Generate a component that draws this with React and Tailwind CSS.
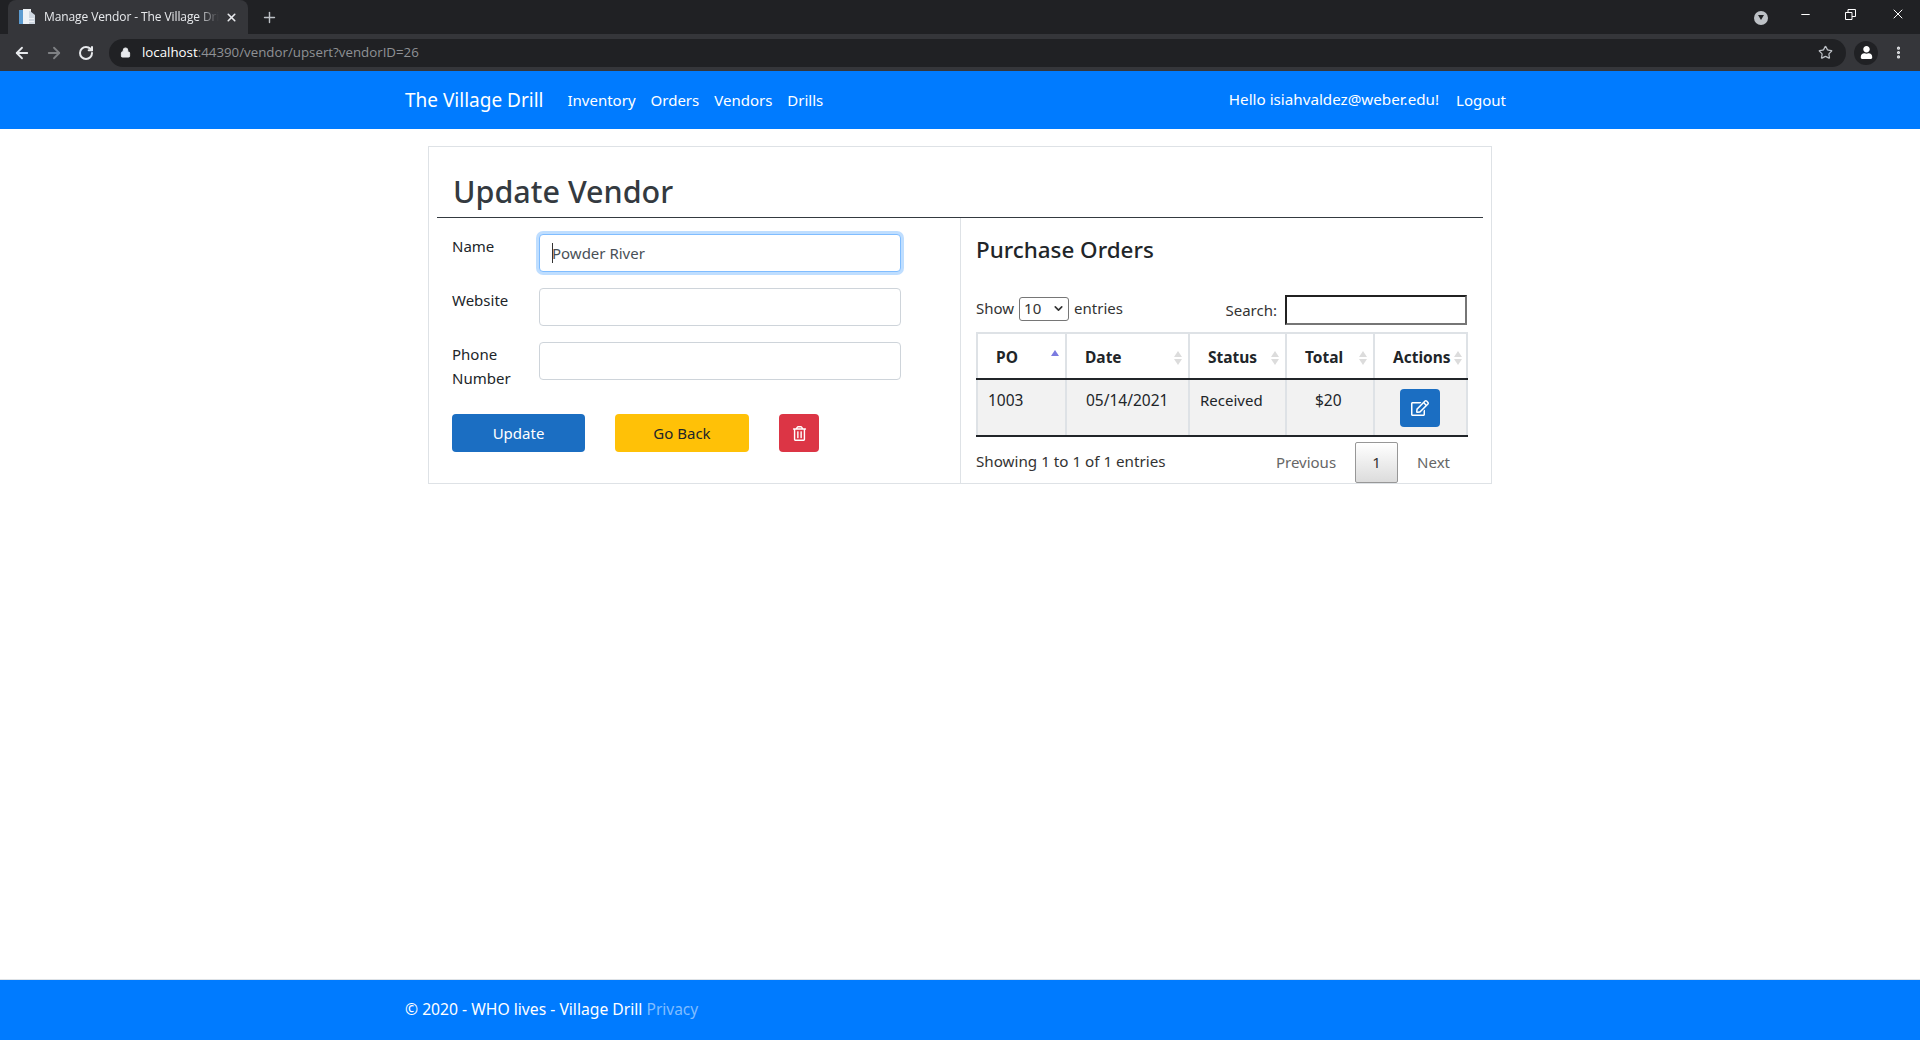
import { ArrowLeft, ArrowRight, RotateCw, Lock, Star, Plus, X, Minus, ChevronDown, MoreVertical } from 'lucide-react';
import { FaRegEdit, FaRegTrashAlt, FaUser } from 'react-icons/fa';

const font = "font-['Noto_Sans','Open_Sans',sans-serif]";
const inputBase = "block w-[362px] h-[38px] rounded border border-[#ced4da] bg-white px-3 text-[15px] text-[#495057]";

function SortArrows({ active }) {
    return (
        <span className="flex flex-col gap-[2px] w-[9px] items-center">
            <span className={`w-0 h-0 border-x-[4px] border-x-transparent border-b-[6px] ${active ? 'border-b-[#7b7be0]' : 'border-b-[#dcdcdc]'}`} />
            {!active && <span className="w-0 h-0 border-x-[4px] border-x-transparent border-t-[6px] border-t-[#dcdcdc]" />}
        </span>
    );
}

function Favicon() {
    return (
        <svg width="16" height="16" viewBox="0 0 16 16" className="mr-[9px] shrink-0">
            <rect x="0" y="1" width="5" height="14" fill="#5b9bd0" />
            <rect x="4" y="0" width="8" height="15" fill="#eef2f6" />
            <path d="M11 2l5 4v9h-6V2z" fill="#cfd8e2" />
            <rect x="10" y="9" width="5" height="1" fill="#eef2f6" />
            <rect x="10" y="12" width="5" height="1" fill="#eef2f6" />
        </svg>
    );
}

function BrowserChrome() {
    return (
        <div className="shrink-0 font-['Open_Sans',sans-serif]">
            <div className="h-[34px] bg-[#202124] flex items-end pl-[8px]">
                <div className="w-[240px] h-[34px] bg-[#35363a] rounded-t-lg flex items-center pl-[11px] pr-[10px] text-[12px] text-[#e8eaed]">
                    <Favicon />
                    <span className="flex-1 whitespace-nowrap overflow-hidden tracking-[-0.1px] [mask-image:linear-gradient(to_right,black_88%,transparent)]">Manage Vendor - The Village Drill</span>
                    <X size={13} strokeWidth={3} className="ml-[6px] shrink-0 text-[#e8eaed]" />
                </div>
                <Plus size={17} className="ml-[13px] mb-[8px] text-[#bdc1c6]" />
                <div className="flex-1" />
                <div className="flex items-center h-[34px] pr-[14px] text-white">
                    <span className="w-[14px] h-[14px] rounded-full bg-[#bdc1c6] flex items-center justify-center mr-[31px] mt-[1px]">
                        <span className="w-0 h-0 border-x-[3px] border-x-transparent border-t-[5px] border-t-[#202124]" />
                    </span>
                    <Minus size={13} className="mr-[33px] -mt-[6px]" />
                    <svg width="11" height="11" viewBox="0 0 11 11" fill="none" stroke="white" className="mr-[34px] -mt-[6px]">
                        <path d="M.5 3.5h6.5v7H.5z" />
                        <path d="M3 3.5V.5h7.5v7H7" />
                    </svg>
                    <X size={16} strokeWidth={1.5} className="-mt-[6px]" />
                </div>
            </div>
            <div className="h-[37px] bg-[#35363a] flex items-center pl-[13px] pr-[14px] text-[#e8eaed]">
                <ArrowLeft size={18} strokeWidth={2.4} />
                <ArrowRight size={18} strokeWidth={2.4} className="ml-[14px] text-[#7f8184]" />
                <RotateCw size={16} strokeWidth={3} className="ml-[15px]" />
                <div className="ml-[15px] flex-1 h-[28px] rounded-full bg-[#202124] flex items-center pl-[11px] pr-[13px] text-[13.3px]">
                    <Lock size={11} fill="#e8eaed" strokeWidth={2} />
                    <span className="ml-[11px] text-white">localhost</span>
                    <span className="text-[#8f9195]">:44390/vendor/upsert?vendorID=26</span>
                    <div className="flex-1" />
                    <Star size={15} className="text-[#bdc1c6]" />
                </div>
                <span className="ml-[8px] w-[24px] h-[24px] rounded-full bg-[#202124] flex items-center justify-center">
                    <FaUser size={13} className="text-white" />
                </span>
                <MoreVertical size={15} strokeWidth={3} className="ml-[13px]" />
            </div>
        </div>
    );
}

function NavBar() {
    return (
        <nav className="shrink-0 h-[58px] bg-[#007bff] flex items-center pl-[405px] pr-[414px] text-white text-[15px]">
            <span className="text-[19px] mr-[24px]">The Village Drill</span>
            <div className="flex gap-[15px]">
                <span>Inventory</span>
                <span>Orders</span>
                <span>Vendors</span>
                <span>Drills</span>
            </div>
            <div className="flex-1" />
            <span className="mr-[17px] text-[15.2px] -mt-[1px]">Hello isiahvaldez@weber.edu!</span>
            <span>Logout</span>
        </nav>
    );
}

function VendorForm() {
    return (
        <div className="w-[523px] pl-[15px] pt-[16px] text-[15px]">
            <div className="flex flex-col gap-[16px]">
                <div className="flex">
                    <label className="w-[87px] leading-[24px]">Name</label>
                    <div className="w-[362px] h-[38px] rounded border border-[#80bdff] shadow-[0_0_0_3px_rgba(0,123,255,0.25)] bg-white px-3 flex items-center text-[#495057]">
                        <span className="w-px h-[20px] bg-[#333] -mr-px" />
                        <span>Powder River</span>
                    </div>
                </div>
                <div className="flex">
                    <label className="w-[87px] leading-[24px]">Website</label>
                    <input className={inputBase} />
                </div>
                <div className="flex h-[38px]">
                    <label className="w-[87px] leading-[24px]">Phone Number</label>
                    <input className={inputBase} />
                </div>
            </div>
            <div className="flex mt-[34px]">
                <button className="w-[133px] h-[38px] rounded bg-[#1b6ec2] text-white">Update</button>
                <button className="ml-[30px] w-[134px] h-[38px] rounded bg-[#ffc107] text-[#212529]">Go Back</button>
                <button className="ml-[30px] w-[40px] h-[38px] rounded bg-[#dc3545] text-white flex items-center justify-center">
                    <FaRegTrashAlt size={15} />
                </button>
            </div>
        </div>
    );
}

function OrdersTable() {
    const thBase = "border-x-2 border-t-2 border-[#dee2e6] border-b-2 border-b-[#212529] font-bold h-[46px] px-0";
    const tdBase = "border-x-2 border-[#dee2e6] border-b-2 border-b-[#212529] align-top pt-[9px] h-[57px]";
    return (
        <table className="w-[490px] table-fixed border-collapse text-[15.5px]">
            <colgroup>
                <col className="w-[89px]" />
                <col className="w-[123px]" />
                <col className="w-[97px]" />
                <col className="w-[88px]" />
                <col className="w-[93px]" />
            </colgroup>
            <thead>
                <tr>
                    <th className={thBase}>
                        <div className="flex items-center pl-[18px] pr-[6px] pt-[3px]"><span className="flex-1 text-left">PO</span><span className="-mt-[9px]"><SortArrows active /></span></div>
                    </th>
                    <th className={thBase}>
                        <div className="flex items-center pl-[18px] pr-[6px] pt-[3px]"><span className="flex-1 text-left">Date</span><SortArrows /></div>
                    </th>
                    <th className={thBase}>
                        <div className="flex items-center pl-[18px] pr-[6px] pt-[3px]"><span className="flex-1 text-left">Status</span><SortArrows /></div>
                    </th>
                    <th className={thBase}>
                        <div className="flex items-center pl-[18px] pr-[6px] pt-[3px]"><span className="flex-1 text-left">Total</span><SortArrows /></div>
                    </th>
                    <th className={thBase}>
                        <div className="flex items-center pl-[18px] pr-[4px] pt-[3px]"><span className="flex-1 text-left">Actions</span><SortArrows /></div>
                    </th>
                </tr>
            </thead>
            <tbody>
                <tr className="bg-[#f2f2f2]">
                    <td className={`${tdBase} pl-[10px]`}>1003</td>
                    <td className={`${tdBase} pl-[19px]`}>05/14/2021</td>
                    <td className={`${tdBase} pl-[10px] text-[15px]`}>Received</td>
                    <td className={`${tdBase} pl-[28px]`}>$20</td>
                    <td className={tdBase}>
                        <button className="ml-[25px] w-[40px] h-[38px] rounded bg-[#1b6ec2] text-white flex items-center justify-center">
                            <FaRegEdit size={18} />
                        </button>
                    </td>
                </tr>
            </tbody>
        </table>
    );
}

function OrdersPanel() {
    return (
        <div className="flex-1 border-l border-[#dee2e6] pl-[15px] pr-[15px]">
            <h4 className="text-[22.4px] font-medium leading-[29px] mt-[17px] text-[#212529]">Purchase Orders</h4>
            <div className="flex items-center justify-between mt-[31px] text-[15px] text-[#333]">
                <div className="flex items-center -mt-[3px]">
                    <span>Show</span>
                    <span className="mx-[5px] w-[50px] h-[24px] border border-[#767676] rounded-[3px] flex items-center justify-between pl-[4px] pr-[3px]">
                        <span>10</span>
                        <ChevronDown size={13} strokeWidth={3} />
                    </span>
                    <span>entries</span>
                </div>
                <div className="flex items-center mr-[1px]">
                    <span className="mr-[8px]">Search:</span>
                    <span className="block w-[182px] h-[30px] border-2 border-t-[#212121] border-l-[#212121] border-r-[#767676] border-b-[#767676]" />
                </div>
            </div>
            <div className="mt-[7px]"><OrdersTable /></div>
            <div className="flex items-center mt-[5px] text-[15px] text-[#333]">
                <span className="flex-1 text-[15.2px] -mt-[2px]">Showing 1 to 1 of 1 entries</span>
                <span className="text-[#666]">Previous</span>
                <span className="ml-[19px] w-[43px] h-[41px] rounded-[2px] border border-[#979797] bg-gradient-to-b from-white to-[#dcdcdc] flex items-center justify-center">1</span>
                <span className="ml-[19px] mr-[18px] text-[#666]">Next</span>
            </div>
        </div>
    );
}

export default function App() {
    return (
        <div className={`h-[1040px] flex flex-col bg-white text-[16px] text-[#212529] ${font}`}>
            <BrowserChrome />
            <NavBar />
            <main className="flex-1 pt-[17px]">
                <div className="ml-[428px] w-[1064px] h-[338px] border border-[#dee2e6] px-[8px] flex flex-col">
                    <h2 className="pl-[16px] pt-[25px] h-[71px] border-b border-[#343a40] text-[30.5px] font-medium leading-[38px] text-[#343a40]">Update Vendor</h2>
                    <div className="flex flex-1">
                        <VendorForm />
                        <OrdersPanel />
                    </div>
                </div>
            </main>
            <footer className="shrink-0 h-[61px] bg-[#007bff] border-t border-[#dee2e6] flex items-center pl-[405px] text-white text-[15.7px]">
                <span>© 2020 - WHO lives - Village Drill <span className="text-[15.5px] text-[#80bdff]">Privacy</span></span>
            </footer>
        </div>
    );
}
